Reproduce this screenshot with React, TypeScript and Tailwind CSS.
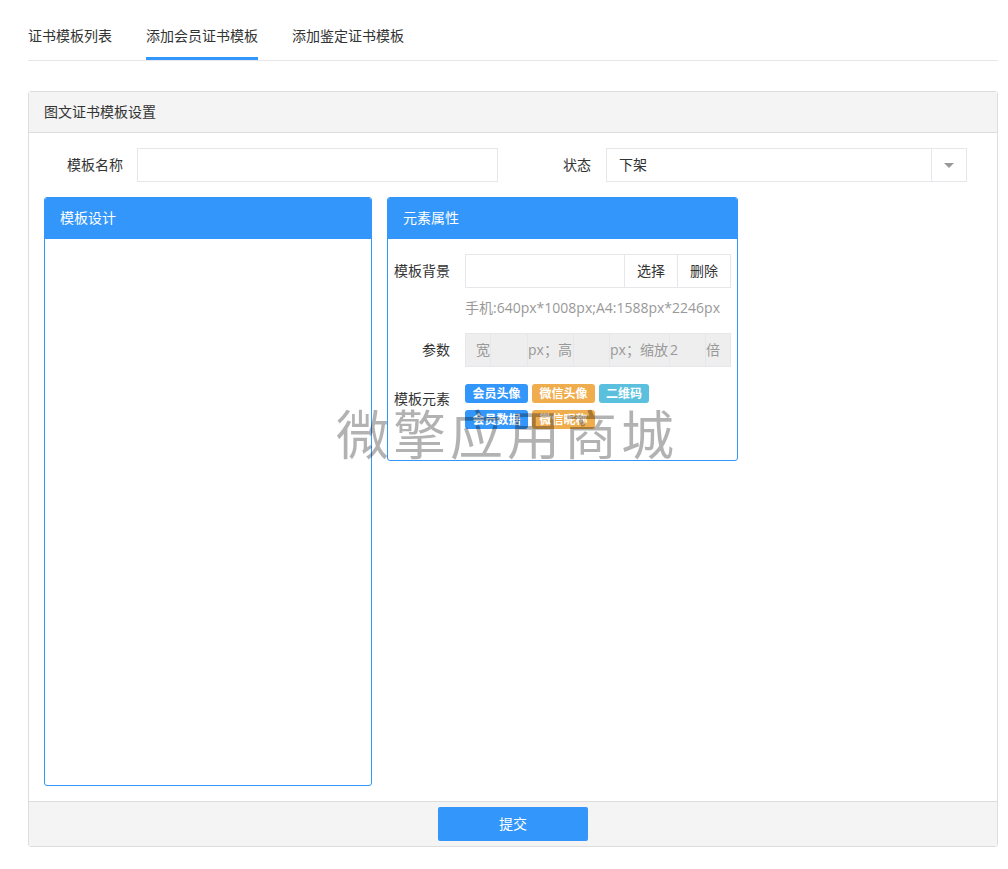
const font = "font-['Open_Sans','Noto_Sans_CJK_SC',sans-serif]";

function Tag({ text, color }: { text: string; color: string }) {
  return (
    <span className={`flex h-[19px] items-center justify-center rounded-[3px] text-xs leading-none font-bold text-white ${color}`}>
      {text}
    </span>
  );
}

function Addon({ className, children }: { className: string; children?: React.ReactNode }) {
  return <div className={`flex h-full items-center border-r border-[#e7e7eb] whitespace-nowrap text-[#999] ${className}`}>{children}</div>;
}

export default function App() {
  return (
    <div className={`relative h-[869px] w-[1008px] bg-white text-sm text-[#333] ${font}`}>
      <div className="pr-[10px] pl-[28px]">
        <div className="flex h-[61px] gap-[34px] border-b border-[#e7e7eb] pt-[26px]">
          <div className="h-[34px]">证书模板列表</div>
          <div className="h-[34px] border-b-[3px] border-[#3296fa]">添加会员证书模板</div>
          <div className="h-[34px]">添加鉴定证书模板</div>
        </div>

        <div className="mt-[30px] flex h-[756px] flex-col rounded-[3px] border border-[#ddd]">
          <div className="flex h-[41px] items-center border-b border-[#ddd] bg-[#f4f4f4] px-[15px]">图文证书模板设置</div>

          <div className="flex-1 px-[15px] pt-[15px]">
            <div className="flex h-[34px] items-center">
              <div className="w-[93px] pr-[14px] text-right">模板名称</div>
              <div className="h-full w-[361px] border border-[#e7e7eb]" />
              <div className="w-[108px] pr-[15px] text-right">状态</div>
              <div className="flex h-full w-[361px] items-center border border-[#e7e7eb]">
                <div className="flex-1 pl-3">下架</div>
                <div className="flex h-full w-[35px] items-center justify-center border-l border-[#e7e7eb]">
                  <span className="h-0 w-0 border-x-[5px] border-t-[5px] border-x-transparent border-t-[#999]" />
                </div>
              </div>
            </div>

            <div className="mt-[15px] flex items-start gap-[15px]">
              <div className="h-[589px] w-[328px] overflow-hidden rounded-[3px] border border-[#3296fa]">
                <div className="flex h-[41px] items-center bg-[#3296fa] px-[15px] pb-[2px] text-white">模板设计</div>
              </div>

              <div className="h-[264px] w-[351px] overflow-hidden rounded-[3px] border border-[#3296fa]">
                <div className="flex h-[41px] items-center bg-[#3296fa] px-[15px] pb-[2px] text-white">元素属性</div>

                <div className="flex pt-[15px] pr-[6px]">
                  <div className="w-[62px] pt-[7px] text-right">模板背景</div>
                  <div className="ml-[15px] flex h-[34px] w-[266px] border border-[#e7e7eb]">
                    <div className="flex-1" />
                    <div className="flex w-[53px] items-center justify-center border-l border-[#e7e7eb]">选择</div>
                    <div className="flex w-[53px] items-center justify-center border-l border-[#e7e7eb]">删除</div>
                  </div>
                </div>
                <div className="mt-[10px] ml-[77px] whitespace-nowrap text-[#999]">手机:640px*1008px;A4:1588px*2246px</div>

                <div className="mt-[15px] flex">
                  <div className="w-[62px] pt-[7px] text-right">参数</div>
                  <div className="ml-[15px] flex h-[34px] w-[266px] border border-[#e7e7eb] bg-[#eee]">
                    <Addon className="w-[25px] pl-[10px]">宽</Addon>
                    <Addon className="w-[37px]" />
                    <Addon className="w-[46px]">px；高</Addon>
                    <Addon className="w-[36px]" />
                    <Addon className="w-[60px]">px；缩放</Addon>
                    <Addon className="w-[36px]">2</Addon>
                    <div className="flex flex-1 items-center text-[#999]">倍</div>
                  </div>
                </div>

                <div className="mt-[17px] flex">
                  <div className="w-[62px] pt-[5px] text-right">模板元素</div>
                  <div className="ml-[15px] flex w-[266px] flex-col gap-[7px]">
                    <div className="flex gap-1">
                      <Tag text="会员头像" color="w-[63px] bg-[#3296fa]" />
                      <Tag text="微信头像" color="w-[63px] bg-[#f0ad4e]" />
                      <Tag text="二维码" color="w-[50px] bg-[#5bc0de]" />
                    </div>
                    <div className="flex gap-1">
                      <Tag text="会员数据" color="w-[63px] bg-[#3296fa]" />
                      <Tag text="微信昵称" color="w-[63px] bg-[#f0ad4e]" />
                    </div>
                  </div>
                </div>
              </div>
            </div>
          </div>

          <div className="flex h-[45px] items-center justify-center border-t border-[#ddd] bg-[#f4f4f4]">
            <button className="h-[34px] w-[150px] rounded-[2px] bg-[#3296fa] text-white">提交</button>
          </div>
        </div>
      </div>

      {/* 水印 */}
      <div className="pointer-events-none absolute top-[401px] left-[336px] text-[53px] leading-[68px] tracking-[4px] whitespace-nowrap text-black/30">
        微擎应用商城
      </div>
    </div>
  );
}
